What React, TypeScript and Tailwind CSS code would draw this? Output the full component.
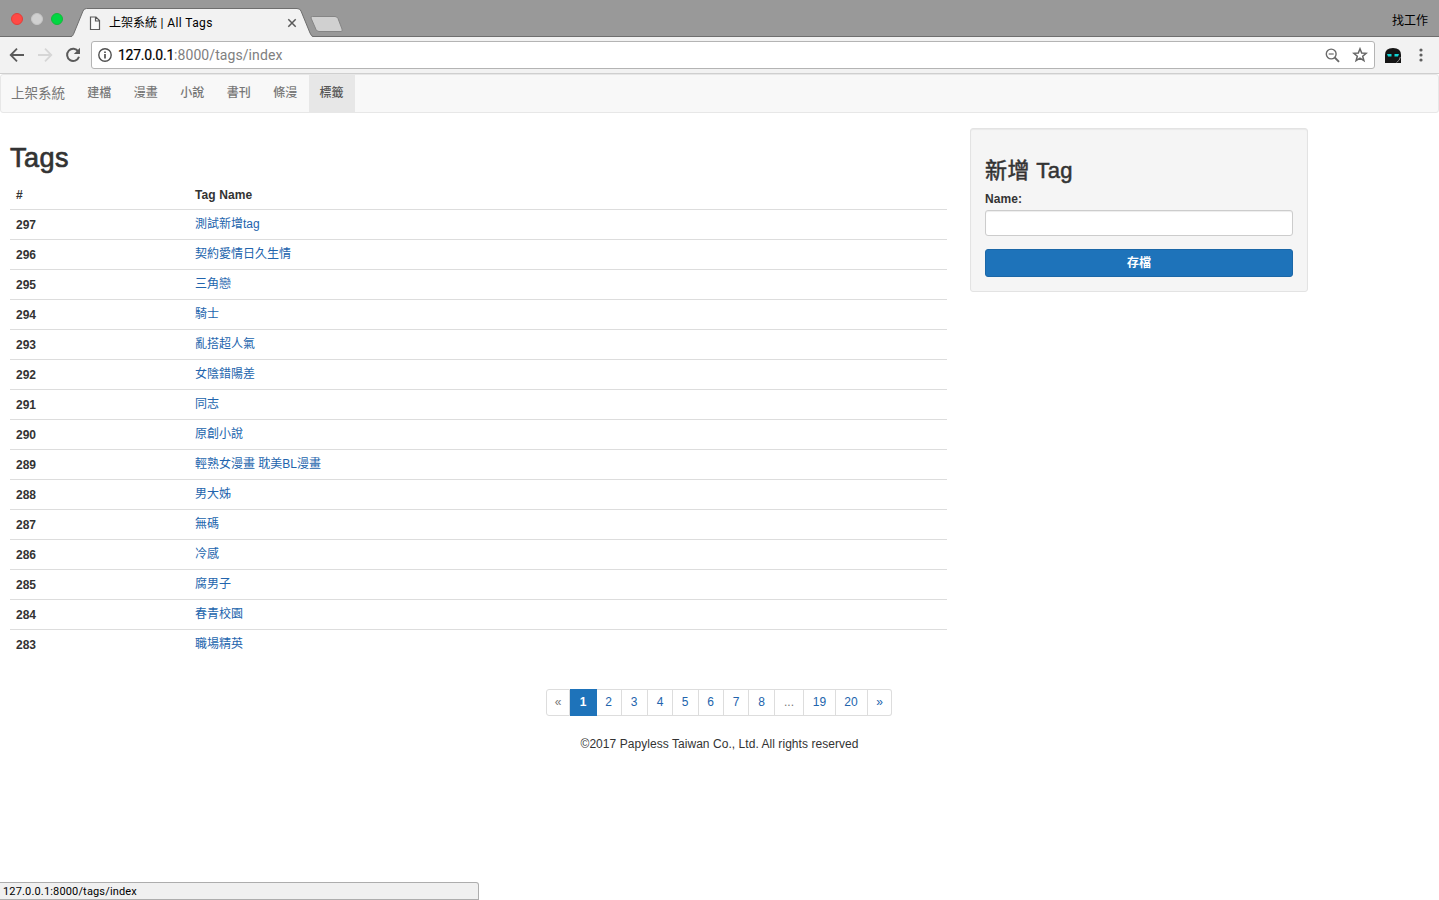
import React from 'react';

const navItems = ['建檔', '漫畫', '小說', '書刊', '條漫', '標籤'];

const tags: [number, string][] = [
  [297, '測試新增tag'],
  [296, '契約愛情日久生情'],
  [295, '三角戀'],
  [294, '騎士'],
  [293, '亂搭超人氣'],
  [292, '女陰錯陽差'],
  [291, '同志'],
  [290, '原創小說'],
  [289, '輕熟女漫畫 耽美BL漫畫'],
  [288, '男大姊'],
  [287, '無碼'],
  [286, '冷感'],
  [285, '腐男子'],
  [284, '春青校園'],
  [283, '職場精英'],
];

const pages: { label: string; cls: string }[] = [
  { label: '«', cls: 'w-[24px] border-l rounded-l-[3px] text-[#777]' },
  { label: '1', cls: 'w-[27px] bg-[#1e73ba] !border-[#1e73ba] text-white font-bold' },
  { label: '2', cls: 'w-[25px] pr-[1px] text-[#2264ad]' },
  { label: '3', cls: 'w-[26px] pr-[1px] text-[#2264ad]' },
  { label: '4', cls: 'w-[25px] text-[#2264ad]' },
  { label: '5', cls: 'w-[26px] pr-[1px] text-[#2264ad]' },
  { label: '6', cls: 'w-[25px] pr-[1px] text-[#2264ad]' },
  { label: '7', cls: 'w-[25px] text-[#2264ad]' },
  { label: '8', cls: 'w-[26px] text-[#2264ad]' },
  { label: '...', cls: 'w-[29px] text-[#777]' },
  { label: '19', cls: 'w-[32px] text-[#2264ad]' },
  { label: '20', cls: 'w-[32px] pr-[1px] text-[#2264ad]' },
  { label: '»', cls: 'w-[24px] rounded-r-[3px] text-[#2264ad]' },
];

function TitleBar() {
  return (
    <div className="relative flex h-[37px] items-start border-b border-[#6e6e6e] bg-[#999] font-[Roboto,'Noto_Sans_CJK_TC',sans-serif]">
      <svg className="absolute left-0 top-0" width="350" height="37" viewBox="0 0 350 37">
        <path d="M71 37 C73 36 73 35 74 33 L83 11 Q84 8.500 86.500 8.500 H297 Q300 8.500 301 11 L310 33 Q311.500 36.500 313 37 Z" fill="#f2f2f2" />
        <path d="M71 36.500 C73 36 73 35 74 33 L83 11 Q84 8.500 86.500 8.500 H297 Q300 8.500 301 11 L310 33 Q311.500 36.500 313 36.500" fill="none" stroke="#6e6e6e" />
        <path d="M312.500 16.500 H335 Q337 16.500 338 18.500 L342 29 Q343 31.500 341 31.500 H319 Q317 31.500 316 29.500 L311 18 Q310.500 16.500 312.500 16.500 Z" fill="#d0d0d0" stroke="#858585" />
      </svg>
      <div className="relative flex h-[38px] w-full items-center">
        <div className="flex gap-2 pl-[11px]">
          <i className="size-3 rounded-full border border-[#e33e38] bg-[#ff4945]" />
          <i className="size-3 rounded-full border border-[#c5c5c5] bg-[#d0d0d0]" />
          <i className="size-3 rounded-full border border-[#14b83a] bg-[#00d742]" />
        </div>
        <svg className="ml-[26px] mt-[8px]" width="12" height="15" viewBox="0 0 12 15" fill="#fafafa" stroke="#5a5a5a" strokeWidth="1.200">
          <path d="M1.500 1 H7 L10.500 4.500 V13.500 H1.500 Z M6.500 1 V5 H10.500" />
        </svg>
        <span className="ml-[8px] mt-[8px] w-[178px] whitespace-nowrap text-[12px] leading-4 text-black">上架系統<span className="tracking-[0.420px]"> | All Tags</span></span>
        <svg className="mt-[8px]" width="10" height="10" viewBox="0 0 10 10" stroke="#5a5a5a" strokeWidth="1.500">
          <path d="M1.300 1.300 L8.700 8.700 M8.700 1.300 L1.300 8.700" />
        </svg>
        <span className="ml-auto mr-[11px] mt-[3px] text-[12px] leading-4 text-black">找工作</span>
      </div>
    </div>
  );
}

function Toolbar() {
  return (
    <div className="flex h-[37px] items-center border-b border-[#cfcfcf] bg-[#f2f2f2] font-[Roboto,sans-serif]">
      <svg className="ml-[9px] shrink-0" width="16" height="16" viewBox="0 0 16 16" fill="none" stroke="#5a5a5a" strokeWidth="1.800">
        <path d="M15 8 H2 M8 1.700 L1.700 8 L8 14.300" />
      </svg>
      <svg className="ml-[12px] shrink-0" width="16" height="16" viewBox="0 0 16 16" fill="none" stroke="#d6d6d6" strokeWidth="1.800">
        <path d="M1 8 H14 M8 1.700 L14.300 8 L8 14.300" />
      </svg>
      <svg className="ml-[12px] shrink-0" width="16" height="16" viewBox="0 0 16 16">
        <path d="M13.300 4.500 A6.100 6.100 0 1 0 14 9.800" fill="none" stroke="#5a5a5a" strokeWidth="2" />
        <path d="M15 0.800 V7 H8.800 Z" fill="#5a5a5a" />
      </svg>
      <div className="ml-[10px] flex h-[28px] w-[1284px] items-center rounded-[3px] border border-[#b4b4b4] bg-white">
        <svg className="ml-[6px]" width="14" height="14" viewBox="0 0 14 14" fill="none" stroke="#505050">
          <circle cx="7" cy="7" r="6.200" strokeWidth="1.400" />
          <path d="M7 6 V10.500 M7 3.400 V5" strokeWidth="1.700" />
        </svg>
        <span className="ml-[6px] text-[14px] leading-5 text-[#808080]"><span className="tracking-[-0.250px] text-black [-webkit-text-stroke:0.200px_black]">127.0.0.1</span><span className="tracking-[0.080px]">:8000/tags/index</span></span>
        <svg className="ml-auto" width="15" height="15" viewBox="0 0 15 15" fill="none" stroke="#6a6a6a">
          <circle cx="6.200" cy="6" r="4.900" strokeWidth="1.400" />
          <path d="M3.700 6 H8.700" strokeWidth="1.200" />
          <path d="M9.700 9.500 L14 13.800" strokeWidth="1.900" />
        </svg>
        <svg className="ml-[12px] mr-[6px]" width="16" height="16" viewBox="0 0 16 16" fill="none" stroke="#666" strokeWidth="1.500">
          <path d="M8 1.800 L9.700 6 L14.200 6.300 L10.700 9.200 L11.900 13.700 L8 11.200 L4.100 13.700 L5.300 9.200 L1.800 6.300 L6.300 6 Z" />
        </svg>
      </div>
      <svg className="ml-[10px]" width="16" height="16" viewBox="0 0 16 16">
        <path d="M0 16 V8 Q0 1 8 1 Q16 1 16 8 V16 Z" fill="#141414" />
        <path d="M2 7 H6.500 V9.500 H3 Z M9.500 7 H14 L13 9.500 H9.500 Z" fill="#10d5d5" />
        <path d="M11.500 15.500 Q15 13.500 15.300 10" stroke="#aaa" strokeWidth="0.800" fill="none" />
      </svg>
      <svg className="ml-[18px]" width="4" height="14" viewBox="0 0 4 14" fill="#5f5f5f">
        <circle cx="2" cy="2" r="1.600" /><circle cx="2" cy="7" r="1.600" /><circle cx="2" cy="12" r="1.600" />
      </svg>
    </div>
  );
}

export default function App() {
  return (
    <div className="flex h-[900px] w-[1439px] flex-col overflow-hidden bg-white font-['Liberation_Sans','Noto_Sans_CJK_TC',sans-serif] text-[12px] leading-[17px] text-[#333]">
      <TitleBar />
      <Toolbar />
      <nav className="flex h-[39px] rounded-[3px] border border-[#e7e7e7] bg-[#f8f8f8] text-[#777]">
        <a className="w-[75px] pl-[10px] pt-[10px] text-[13.500px]">上架系統</a>
        {navItems.map((item) => (
          <a
            key={item}
            className="w-[46.500px] pt-[10px] text-center font-medium last:w-[46px] last:bg-[#e7e7e7] last:text-[#555]"
          >
            {item}
          </a>
        ))}
      </nav>

      <main className="flex">
        <section className="w-[947px] pl-[10px] pt-[29px]">
          <h1 className="h-[38px] text-[27px] leading-[32px] tracking-[0.500px] [-webkit-text-stroke:0.700px_#333]">Tags</h1>
          <table className="w-full table-fixed border-collapse">
            <thead>
              <tr className="h-[29px] border-b border-[#ddd] text-left">
                <th className="w-[179px] px-[6px] pb-0 pt-[2px]">#</th>
                <th className="px-[6px] pb-0 pt-[2px] tracking-[0.100px]">Tag Name</th>
              </tr>
            </thead>
            <tbody>
              {tags.map(([id, name]) => (
                <tr key={id} className="h-[30px] border-b border-[#ddd] last:border-b-0">
                  <th className="px-[6px] pb-0 pt-[2px] text-left">{id}</th>
                  <td className="px-[6px] py-0 text-[#2264ad]">{name}</td>
                </tr>
              ))}
            </tbody>
          </table>
        </section>
        <aside className="ml-[23px] mt-[15px] h-[164px] w-[338px] rounded-[3px] border border-[#e3e3e3] bg-[#f5f5f5] px-[14px] pt-[27px] shadow-[inset_0_1px_1px_rgba(0,0,0,0.050)]">
          <h2 className="h-[35px] text-[22px] leading-[30px] tracking-[0.400px] [-webkit-text-stroke:0.500px_#333]">新增 Tag</h2>
          <label className="block h-[19px] font-bold tracking-[0.100px]">Name:</label>
          <input className="block h-[26px] w-full rounded-[3px] border border-[#ccc] bg-white px-2 shadow-[inset_0_1px_1px_rgba(0,0,0,0.075)]" />
          <button className="mt-[13px] block h-[28px] w-full rounded-[3px] border border-[#1b67a7] bg-[#1e73ba] font-bold text-white">存檔</button>
        </aside>
      </main>

      <div className="mt-[30px] flex h-[27px] pl-[546px]">
        {pages.map((p) => (
          <a key={p.label} className={`flex items-center justify-center border-y border-r border-[#ddd] ${p.cls}`}>
            {p.label}
          </a>
        ))}
      </div>
      <footer className="mt-[20px] text-center tracking-[0.050px]">©2017 Papyless Taiwan Co., Ltd. All rights reserved</footer>

      <div className="mt-auto h-[18px] w-[479px] rounded-tr-[3px] border border-l-0 border-[#adadad] bg-[#f0f0f0] pl-[3px] pt-[1px] font-[Roboto,sans-serif] text-[11px] leading-[16px] tracking-[0.160px] text-black">
        127.0.0.1:8000/tags/index
      </div>
    </div>
  );
}
